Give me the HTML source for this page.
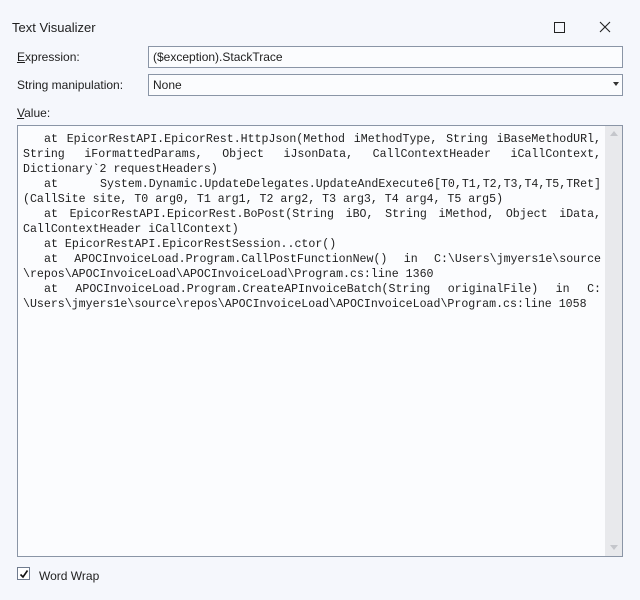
<!DOCTYPE html>
<html><head><meta charset="utf-8"><style>
body{margin:0;width:640px;height:600px;background:#f5f7fc;font-family:"Liberation Sans",sans-serif;font-size:12px;color:#1e1e1e;position:relative;overflow:hidden}
.abs{position:absolute}
.box{position:absolute;border:1px solid #8a95a6;background:#fbfcfe;box-sizing:border-box}
.mono{position:absolute;left:23px;top:132px;width:578px;font-family:"Liberation Mono",monospace;font-size:11.6px;line-height:15px;color:#1e1e1e}
.j{text-align:justify;text-align-last:justify}
.i{text-indent:21px}
</style></head><body>
<div class="abs" style="left:12px;top:20px;font-size:13px">Text Visualizer</div>
<div class="abs" style="left:554px;top:22px;width:9px;height:9px;border:1px solid #222"></div>
<svg class="abs" style="left:599px;top:21px" width="12" height="12"><path d="M1 1L11 11M11 1L1 11" stroke="#222" stroke-width="1.1"/></svg>
<div class="abs" style="left:17px;top:50px"><u>E</u>xpression:</div>
<div class="box" style="left:148px;top:46px;width:475px;height:22px"></div>
<div class="abs" style="left:153px;top:50px">($exception).StackTrace</div>
<div class="abs" style="left:17px;top:78px">String manipulation:</div>
<div class="box" style="left:148px;top:74px;width:475px;height:22px"></div>
<div class="abs" style="left:153px;top:78px">None</div>
<svg class="abs" style="left:613px;top:82px" width="6" height="4"><path d="M0 0H6L3 4Z" fill="#333"/></svg>
<div class="abs" style="left:17px;top:106px"><u>V</u>alue:</div>
<div class="box" style="left:17px;top:125px;width:606px;height:432px"></div>
<div class="abs" style="left:605px;top:126px;width:17px;height:430px;background:#e8e9ec"></div>
<svg class="abs" style="left:610px;top:131px" width="8" height="5"><path d="M0 5H8L4 0Z" fill="#c4c6cb"/></svg>
<svg class="abs" style="left:610px;top:545px" width="8" height="5"><path d="M0 0H8L4 5Z" fill="#c4c6cb"/></svg>
<div class="mono">
<div class="j i">at EpicorRestAPI.EpicorRest.HttpJson(Method iMethodType, String iBaseMethodURl,</div>
<div class="j">String iFormattedParams, Object iJsonData, CallContextHeader iCallContext,</div>
<div>Dictionary`2 requestHeaders)</div>
<div class="j i">at System.Dynamic.UpdateDelegates.UpdateAndExecute6[T0,T1,T2,T3,T4,T5,TRet]</div>
<div>(CallSite site, T0 arg0, T1 arg1, T2 arg2, T3 arg3, T4 arg4, T5 arg5)</div>
<div class="j i">at EpicorRestAPI.EpicorRest.BoPost(String iBO, String iMethod, Object iData,</div>
<div>CallContextHeader iCallContext)</div>
<div class="i">at EpicorRestAPI.EpicorRestSession..ctor()</div>
<div class="j i">at APOCInvoiceLoad.Program.CallPostFunctionNew() in C:\Users\jmyers1e\source</div>
<div>\repos\APOCInvoiceLoad\APOCInvoiceLoad\Program.cs:line 1360</div>
<div class="j i">at APOCInvoiceLoad.Program.CreateAPInvoiceBatch(String originalFile) in C:</div>
<div>\Users\jmyers1e\source\repos\APOCInvoiceLoad\APOCInvoiceLoad\Program.cs:line 1058</div>
</div>
<div class="abs" style="left:17px;top:567px;width:13px;height:13px;border:1px solid #6f7b8e;background:#fff;box-sizing:border-box"></div>
<svg class="abs" style="left:19px;top:569px" width="10" height="10"><path d="M1.5 5.5L4 8L8.5 1.5" stroke="#111" stroke-width="1.6" fill="none"/></svg>
<div class="abs" style="left:39px;top:569px">Word Wrap</div>
</body></html>
